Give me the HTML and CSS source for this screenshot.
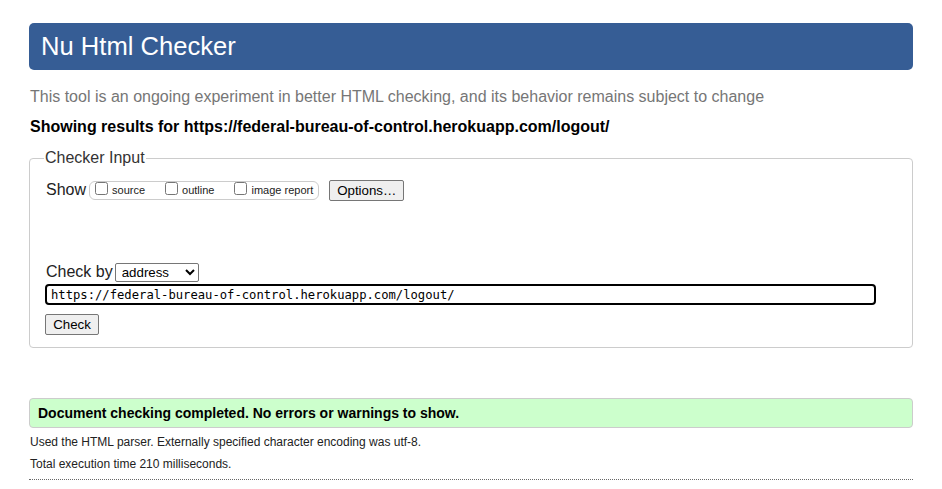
FILE: index.html
```html
<!DOCTYPE html>
<html>
<head>
<meta charset="utf-8">
<title>Nu Html Checker</title>
<link rel="stylesheet" href="styles.css">
</head>
<body>
<h1 class="title">Nu Html Checker</h1>
<p class="intro">This tool is an ongoing experiment in better HTML checking, and its behavior remains subject to change</p>
<p class="showing">Showing results for https://federal-bureau-of-control.herokuapp.com/logout/</p>
<form class="checker">
<fieldset class="fs">
<legend class="legend">Checker Input</legend>
<div class="show-row">
<span class="label">Show</span>
<span class="pill">
<label class="opt"><input type="checkbox" class="cb">source</label>
<label class="opt"><input type="checkbox" class="cb">outline</label>
<label class="opt"><input type="checkbox" class="cb">image report</label>
</span>
<button type="button" class="btn options">Options…</button>
</div>
<div class="checkby-row">
<span class="label">Check by</span>
<select class="sel"><option>address</option></select>
</div>
<div class="url-row"><input class="url" type="text" value="https://federal-bureau-of-control.herokuapp.com/logout/"></div>
<div class="submit-row"><button type="button" class="btn check">Check</button></div>
</fieldset>
</form>
<p class="success">Document checking completed. No errors or warnings to show.</p>
<p class="details">Used the HTML parser. Externally specified character encoding was utf-8.</p>
<p class="details">Total execution time 210 milliseconds.</p>
<hr class="rule">
</body>
</html>
```
FILE: styles.css
```css
html, body {
  margin: 0;
  padding: 0;
  background: #fff;
}
body {
  padding: 23px 29px 0 29px;
  font-family: "Liberation Sans", Arial, sans-serif;
  color: #000;
}
.title {
  margin: 0;
  height: 47px;
  line-height: 47px;
  padding: 0 12px;
  background: #365d95;
  color: #fff;
  font-size: 25.6px;
  font-weight: normal;
  border-radius: 5px;
}
.intro {
  margin: 18px 0 0 1px;
  font-size: 16px;
  line-height: 18px;
  color: #767676;
}
.showing {
  margin: 12px 0 0 1px;
  font-size: 16px;
  line-height: 18px;
  font-weight: bold;
}
.checker {
  margin: 13px 0 0 0;
}
.fs {
  margin: 0;
  padding: 12px 16px 12px 16px;
  border: 1px solid #cccccc;
  border-radius: 4px;
  min-width: 0;
}
.legend {
  padding: 0 1px;
  margin-left: -2px;
  font-size: 16px;
  color: #333;
}
.label {
  font-size: 16px;
  color: #222;
}
.show-row {
  display: flex;
  align-items: center;
  height: 22px;
}
.pill {
  display: inline-flex;
  align-items: center;
  margin-left: 3px;
  height: 17px;
  padding: 0 5px 0 5px;
  border: 1px solid #cccccc;
  border-radius: 6px;
  font-size: 11px;
}
.opt {
  display: inline-flex;
  align-items: center;
  margin-right: 20px;
  color: #222;
}
.opt:last-child {
  margin-right: 0;
}
.cb {
  margin: -3px 4px 0 0;
  width: 13px;
  height: 13px;
}
.btn {
  font-family: "Liberation Sans", Arial, sans-serif;
  font-size: 13.3px;
  color: #000;
  background: #efefef;
  border: 1px solid #767676;
  border-radius: 2px;
  padding: 1px 6px;
}
.options {
  margin-left: 10px;
  height: 21px;
  width: 75px;
}
.checkby-row {
  display: flex;
  align-items: center;
  margin-top: 61px;
  height: 20px;
}
.sel {
  margin-left: 2px;
  width: 84px;
  height: 19px;
  font-family: "Liberation Sans", Arial, sans-serif;
  font-size: 13.3px;
  border: 1px solid #767676;
  border-radius: 2px;
  background: #fff;
  padding: 0 2px;
}
.url-row {
  margin-top: 2px;
}
.url {
  box-sizing: border-box;
  width: 831px;
  height: 21px;
  margin: 0 0 0 -1px;
  padding: 0 4px;
  border: 2px solid #000;
  border-radius: 4px;
  font-family: "DejaVu Sans Mono", monospace;
  font-size: 12.2px;
  color: #000;
  outline: none;
}
.submit-row {
  margin-top: 9px;
}
.check {
  width: 54px;
  height: 21px;
  margin-left: -1px;
}
.success {
  margin: 50px 0 0 0;
  box-sizing: border-box;
  height: 30px;
  line-height: 28px;
  padding: 0 8px;
  background: #ccffcc;
  border: 1px solid #cccccc;
  border-radius: 4px;
  font-size: 14px;
  font-weight: bold;
}
.details {
  margin: 6px 0 0 1px;
  font-size: 12px;
  line-height: 16px;
  color: #222;
}
.rule {
  margin: 7px 0 0 0;
  border: 0;
  border-top: 1px dotted #666;
}
```
